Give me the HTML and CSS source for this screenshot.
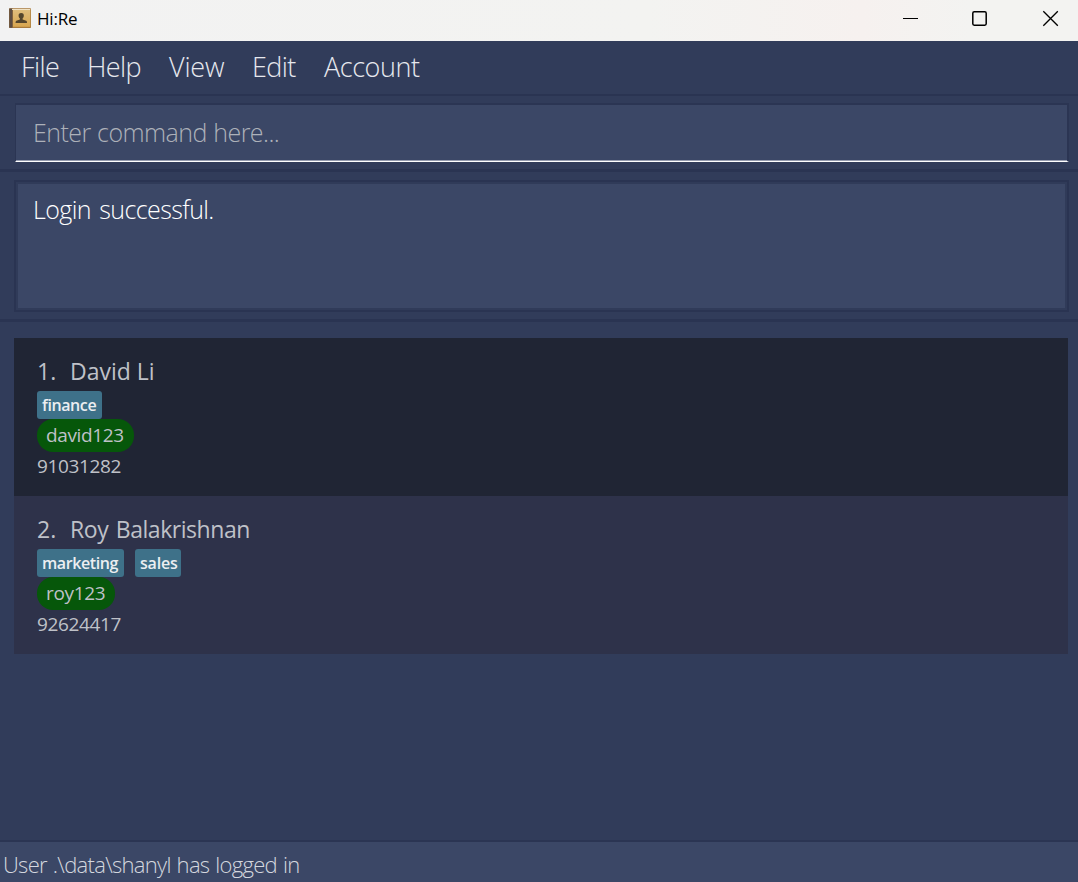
FILE: index.html
```html
<!DOCTYPE html>
<html lang="en">
<head>
<meta charset="utf-8">
<title>Hi:Re</title>
<link rel="stylesheet" href="styles.css">
</head>
<body>
<div class="window">
  <header class="titlebar">
    <svg class="app-icon" width="22" height="22" viewBox="0 0 22 22">
      <defs>
        <linearGradient id="cover" x1="0" y1="0" x2="0" y2="1">
          <stop offset="0" stop-color="#e0bd7c"/>
          <stop offset="1" stop-color="#d8a650"/>
        </linearGradient>
      </defs>
      <rect x="0" y="0.3" width="22" height="19.700" rx="0.800" fill="#a87a3c"/>
      <rect x="0.300" y="0.500" width="3.200" height="19.300" fill="#5c4c42"/>
      <rect x="3" y="1" width="18.300" height="1" fill="#f0e2c4"/>
      <rect x="4" y="2" width="17.300" height="16.800" fill="url(#cover)"/>
      <path d="M12.200 5c1.900 0 2.800 1.200 2.600 2.900-.1 1.200-.6 2-1.200 2.600v1.100l3.600 1.100c.6.3.8.8.8 2.200H6.600c0-1.400.2-1.900.8-2.200l3.500-1.100v-1.100c-.7-.6-1.200-1.400-1.300-2.600-.2-1.700.7-2.900 2.600-2.900z" fill="#54452d"/>
    </svg>
    <span class="title">Hi:Re</span>
    <svg class="controls" width="160" height="18" viewBox="0 0 160 18" fill="none" stroke="#000">
      <path d="M1 9.500h15" />
      <rect x="70.800" y="2.800" width="13.400" height="13.400" rx="1.400" stroke-width="1.500"/>
      <path d="M141.300 2.300l14.500 14.500M155.800 2.300l-14.500 14.500" stroke-width="1.300"/>
    </svg>
  </header>
  <nav class="menubar">
    <span class="menu file">File</span>
    <span class="menu help">Help</span>
    <span class="menu view">View</span>
    <span class="menu edit">Edit</span>
    <span class="menu account">Account</span>
  </nav>
  <section class="command-pane">
    <div class="command-box"><span class="prompt">Enter command here...</span></div>
  </section>
  <section class="result-pane">
    <div class="result-box"><span class="result">Login successful.</span></div>
  </section>
  <main class="list-pane">
    <article class="person">
      <div class="heading"><span class="index">1.</span><span class="name david">David Li</span></div>
      <div class="tags"><span class="tag finance"><span>finance</span></span></div>
      <div class="account-id david-id"><span>david123</span></div>
      <div class="phone">91031282</div>
    </article>
    <article class="person alternate">
      <div class="heading"><span class="index">2.</span><span class="name roy">Roy Balakrishnan</span></div>
      <div class="tags"><span class="tag marketing"><span>marketing</span></span><span class="tag sales"><span>sales</span></span></div>
      <div class="account-id roy-id"><span>roy123</span></div>
      <div class="phone">92624417</div>
    </article>
  </main>
  <footer class="statusbar"><span class="status">User .\data\shanyl has logged in</span></footer>
</div>
</body>
</html>
```

FILE: styles.css
```css
* { box-sizing: border-box; }
body { margin: 0; font-family: "Open Sans", "Noto Sans", sans-serif; }
.window {
  width: 1078px; height: 882px; overflow: hidden;
  display: flex; flex-direction: column;
  background: #313c5a; white-space: nowrap;
}
.titlebar {
  height: 41px; flex: none; display: flex; align-items: flex-start;
  padding: 8px 16px 0 9px;
  background: linear-gradient(90deg, #f2f2f2 0%, #f3f3f1 60%, #f6f1ef 80%, #f3f3f1 90%);
}
.app-icon { flex: none; }
.title { margin-left: 6px; font-size: 17px; line-height: 22px; color: #000; letter-spacing: -0.200px; }
.controls { margin-left: auto; margin-top: 1px; flex: none; }
.menubar {
  height: 55px; flex: none; display: flex; padding-left: 21px;
  border-bottom: 2px solid #2a3452;
  font-size: 27px; font-weight: 300; line-height: 52px; color: #e6e8ee;
}
.menu { flex: none; letter-spacing: -0.600px; }
.file { width: 66px; }
.help { width: 82px; }
.view { width: 83px; letter-spacing: -0.200px; }
.edit { width: 72px; }
.account { letter-spacing: -0.450px; }
.command-pane { height: 76px; flex: none; padding: 7px 9px 0 14px; border-bottom: 3px solid #2a3452; }
.command-box {
  height: 59px; padding-left: 17px; margin-left: 1px; background: #3b4766;
  border: 2px solid #2b3553; border-left-width: 1px; border-bottom: 1px solid #fff;
  box-shadow: inset 0 -1px 0 #969db0;
  font-size: 25px; font-weight: 300; line-height: 54px; letter-spacing: -0.550px; word-spacing: 0.500px; color: #adb1b9;
}
.result-pane { height: 150px; flex: none; padding: 8px 9px 0 14px; border-bottom: 3px solid #2a3452; }
.result-box {
  height: 132px; padding: 7px 0 0 17px; background: #3b4766;
  border: 2px solid #2a3452; box-shadow: inset 0 0 0 2px #303b59;
  font-size: 25px; font-weight: 300; line-height: 41px; letter-spacing: -0.600px; word-spacing: 2.500px; color: #fff;
}
.list-pane { flex: 1; padding: 16px 10px 0 14px; }
.person { height: 158px; padding: 18px 0 0 23px; background: #202534; color: #bfc1c8; }
.alternate { background: #2e324a; }
.heading { display: flex; height: 35px; font-size: 23px; line-height: 31px; }
.index { width: 33px; }
.roy { letter-spacing: -0.450px; word-spacing: 2px; }
.tags { display: flex; gap: 11px; height: 28px; }
.tag {
  height: 28px; padding-left: 5px; border-radius: 3px; background: #3e7189;
  font-size: 16px; font-weight: 600; line-height: 28px; letter-spacing: -0.400px; color: #eceef1;
}
.finance { width: 65px; }
.marketing { width: 87px; }
.sales { width: 46px; letter-spacing: -0.200px; }
.account-id {
  height: 33px; padding-left: 9px; border-radius: 16px; background: #06570a;
  font-size: 19px; line-height: 32px; letter-spacing: -0.350px;
}
.david-id { width: 97px; }
.roy-id { width: 78px; }
.phone { font-size: 19px; line-height: 29px; letter-spacing: -0.380px; }
.statusbar {
  height: 42px; flex: none; padding-left: 3px; background: #3b4766;
  border-top: 2px solid #2b3553;
  font-size: 22px; font-weight: 300; line-height: 45px; letter-spacing: -0.700px; word-spacing: 0.900px; color: #d4d7df;
}
```
